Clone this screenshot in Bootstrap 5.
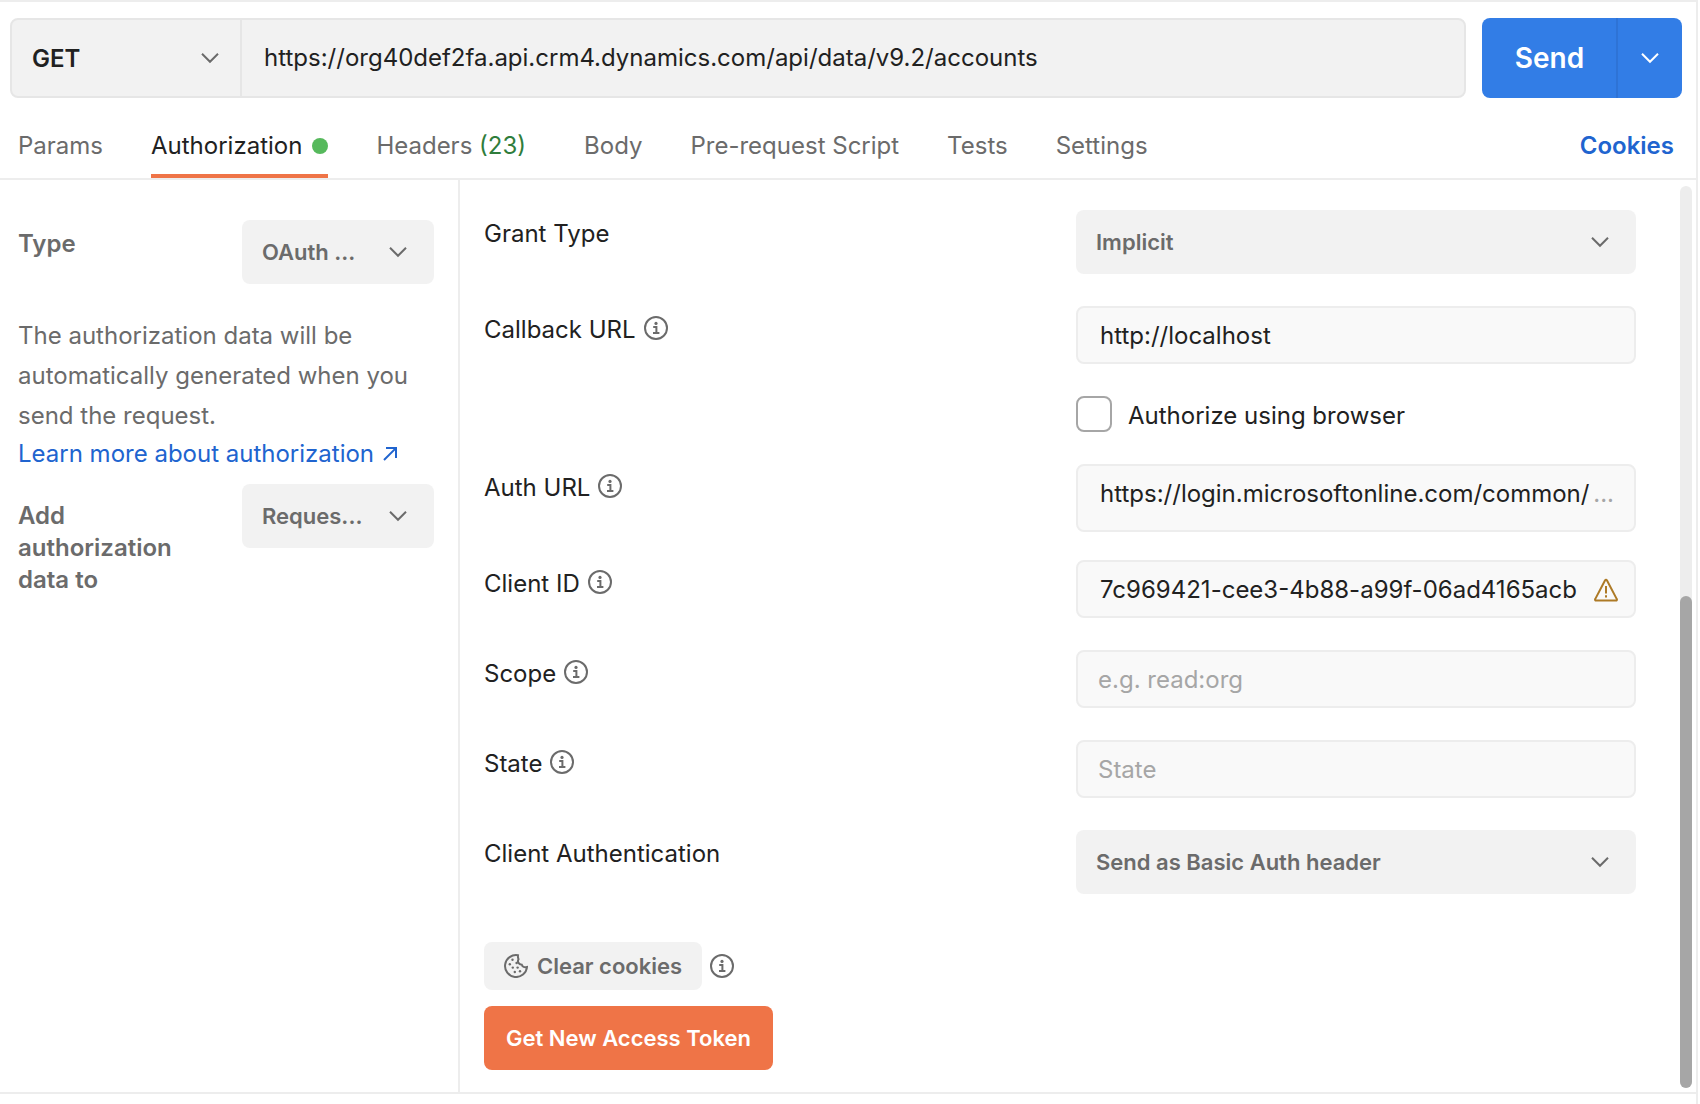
<!DOCTYPE html>
<html lang="en">
<head>
<meta charset="utf-8">
<meta name="viewport" content="width=device-width, initial-scale=1">
<title>Request authorization</title>
<link href="https://cdn.jsdelivr.net/npm/bootstrap@5.3.0/dist/css/bootstrap.min.css" rel="stylesheet">
<style>
:root { --ink: #212121; --dim: #6b6b6b; --line: #ededed; --fill: #f2f2f2; --link: #2064cf; }
body { font-family: Inter, "Liberation Sans", sans-serif; font-size: 24px; line-height: 32px; color: var(--ink); background: #fff; }
svg { flex: none; display: block; }
.pane { border-top: 2px solid var(--line); border-right: 2px solid var(--line); margin-right: 2px; }
.url-row { padding: 16px 14px 0 10px; gap: 16px; }
.url-box { height: 80px; border: 2px solid #e6e6e6; border-radius: 8px; background: var(--fill); overflow: hidden; }
.method-pick { flex: 0 0 230px; border: 0; border-right: 2px solid #e6e6e6; border-radius: 0; font-size: 24px; font-weight: 600; color: var(--ink); background-color: transparent; padding: 2px 20px 0; background-position: right 20px center; }
.url-input { border: 0; background: transparent; font-size: 24px; color: var(--ink); padding: 0 22px; border-radius: 0; }
.chev { background-image: url("data:image/svg+xml,%3Csvg xmlns='http://www.w3.org/2000/svg' viewBox='0 0 20 12'%3E%3Cpath d='M2 1.8l8 8 8-8' fill='none' stroke='%236b6b6b' stroke-width='2'/%3E%3C/svg%3E"); background-size: 20px 12px; background-repeat: no-repeat; }
.send-group { height: 80px; width: 200px; }
.send-group .btn { background: #327de6; border: 0; color: #fff; font-size: 28px; font-weight: 600; border-radius: 8px; padding: 0; }
.send-group .send-menu { flex: 0 0 66px; border-left: 2px solid #2e73d6; }
.tab-bar { padding: 16px 22px 0 18px; border-bottom: 2px solid var(--line); }
.tab-bar .nav { gap: 0 48px; }
.tab-bar .nav-link { color: var(--dim); padding: 16px 0 12px; height: 64px; border-bottom: 4px solid transparent; display: flex; align-items: center; }
.tab-bar .nav-link.active { color: var(--ink); border-color: #ef7447; }
.tab-bar .count { color: #2f7d3b; padding-right: 10px; white-space: pre; }
.dot { width: 16px; height: 16px; border-radius: 50%; background: #56b95c; margin-left: 10px; }
.cookies-link { color: var(--link); font-weight: 600; }
.auth-area { border-bottom: 2px solid var(--line); }
.auth-side { flex: 0 0 460px; border-right: 2px solid var(--line); padding: 40px 24px 0 18px; color: var(--dim); }
.side-label { font-weight: 600; max-width: 180px; }
.side-text { line-height: 40px; margin: 32px 0 2px; }
.side-link { color: var(--link); margin-bottom: 14px; }
.pick { height: 64px; border: 0; border-radius: 8px; background-color: var(--fill); color: var(--dim); font-size: 22px; font-weight: 600; padding: 0 20px; background-position: right 26px center; }
.side-pick { width: 192px; flex: none; }
.auth-main { padding: 30px 44px 22px 24px; }
.field-list { gap: 32px; }
.field-label { line-height: 30px; padding-top: 9px; gap: 8px; }
.field-label svg { margin-bottom: 4px; }
.field-box { flex: 0 0 560px; }
.auth-url { margin-bottom: -4px; }
.more { color: #a6a6a6; }
.txt { height: 58px; border: 2px solid var(--line); border-radius: 8px; background: #f9f9f9; font-size: 24px; color: var(--ink); padding: 0 20px 0 22px; }
input.txt::placeholder { color: #a6a6a6; opacity: 1; }
input.txt:placeholder-shown { padding-left: 20px; }
.txt input { border: 0; background: transparent; padding: 0; color: inherit; min-width: 0; }
.txt.tall { height: 68px; padding-bottom: 8px; }
.txt.flagged { padding-top: 2px; padding-right: 16px; }
.form-check .tick { width: 36px; height: 36px; margin: 0; border: 2px solid #a6a6a6; border-radius: 8px; flex: none; }
.form-check { gap: 16px; min-height: 36px; }
.form-check label { padding-top: 4px; }
.clear-btn { height: 48px; background: var(--fill); color: var(--dim); border: 0; border-radius: 8px; font-size: 22px; font-weight: 600; padding: 0 20px; gap: 9px; }
.token-btn { height: 64px; background: #ef7447; color: #fff; border: 0; border-radius: 8px; font-size: 22px; font-weight: 600; padding: 0 22px; }
.scroll-track { flex: 0 0 12px; margin: 6px 4px 4px 0; border-radius: 6px; background: var(--line); }
.scroll-thumb { height: 54.5%; border-radius: 6px; background: #a6a6a6; }
</style>
</head>
<body>
<svg class="d-none" aria-hidden="true">
  <symbol id="info" viewBox="0 0 24 24"><circle cx="12" cy="12" r="11" fill="none" stroke="#6b6b6b" stroke-width="2"/><circle cx="12" cy="7.4" r="1.6" fill="#6b6b6b"/><path d="M9.2 11h3.200v6M9 17h6.400" fill="none" stroke="#6b6b6b" stroke-width="2"/></symbol>
</svg>
<div class="pane min-vh-100">
  <form class="url-row d-flex">
    <div class="url-box d-flex flex-grow-1">
      <select class="form-select chev method-pick" aria-label="Method"><option>GET</option></select>
      <input class="form-control url-input flex-grow-1" aria-label="Request URL" value="https://org40def2fa.api.crm4.dynamics.com/api/data/v9.2/accounts">
    </div>
    <div class="btn-group send-group">
      <button type="button" class="btn flex-grow-1">Send</button>
      <button type="button" class="btn send-menu d-flex align-items-center justify-content-center" aria-label="Send options">
        <svg width="20" height="12" viewBox="0 0 20 12"><path d="M2 1.8l8 8 8-8" fill="none" stroke="#fff" stroke-width="2"/></svg>
      </button>
    </div>
  </form>
  <div class="tab-bar d-flex justify-content-between align-items-center">
    <nav class="nav">
      <a class="nav-link" href="#">Params</a>
      <a class="nav-link active" href="#">Authorization<span class="dot"></span></a>
      <a class="nav-link" href="#">Headers<span class="count"> (23)</span></a>
      <a class="nav-link" href="#">Body</a>
      <a class="nav-link" href="#">Pre-request Script</a>
      <a class="nav-link" href="#">Tests</a>
      <a class="nav-link" href="#">Settings</a>
    </nav>
    <a class="cookies-link text-decoration-none" href="#">Cookies</a>
  </div>
  <div class="auth-area d-flex">
    <aside class="auth-side">
      <div class="d-flex justify-content-between">
        <label class="side-label pt-2" for="type">Type</label>
        <select id="type" class="form-select chev pick side-pick"><option>OAuth ...</option></select>
      </div>
      <p class="side-text">The authorization data will be automatically generated when you send the request.</p>
      <a class="side-link text-decoration-none d-flex align-items-center gap-2" href="#">Learn more about authorization
        <svg width="16" height="16" viewBox="0 0 16 16"><path d="M2 14L13.400 2.600M4 2h10v10" fill="none" stroke="#2064cf" stroke-width="2"/></svg>
      </a>
      <div class="d-flex justify-content-between">
        <label class="side-label pt-3" for="addto">Add authorization data to</label>
        <select id="addto" class="form-select chev pick side-pick"><option>Reques...</option></select>
      </div>
    </aside>
    <main class="auth-main flex-grow-1">
      <div class="field-list d-flex flex-column">
        <div class="d-flex justify-content-between">
          <label class="field-label" for="grant">Grant Type</label>
          <div class="field-box"><select id="grant" class="form-select chev pick"><option>Implicit</option></select></div>
        </div>
        <div class="d-flex justify-content-between">
          <label class="field-label d-flex align-self-start align-items-center" for="callback">Callback URL <svg width="24" height="24"><use href="#info"/></svg></label>
          <div class="field-box"><input id="callback" class="form-control txt" value="http://localhost"></div>
        </div>
        <div class="d-flex justify-content-end">
          <div class="field-box form-check d-flex align-items-center m-0 p-0">
            <input id="browser" type="checkbox" class="form-check-input tick float-none"><label for="browser">Authorize using browser</label>
          </div>
        </div>
        <div class="d-flex justify-content-between auth-url">
          <label class="field-label d-flex align-self-start align-items-center" for="authurl">Auth URL <svg width="24" height="24"><use href="#info"/></svg></label>
          <div class="field-box"><div class="txt tall d-flex align-items-center"><input id="authurl" class="flex-grow-1" value="https://login.microsoftonline.com/common/"><span class="more">...</span></div></div>
        </div>
        <div class="d-flex justify-content-between">
          <label class="field-label d-flex align-self-start align-items-center" for="client">Client ID <svg width="24" height="24"><use href="#info"/></svg></label>
          <div class="field-box"><div class="txt flagged d-flex align-items-center"><input id="client" class="flex-grow-1" value="7c969421-cee3-4b88-a99f-06ad4165acb">
            <svg width="24" height="24" viewBox="0 0 24 24" fill="none" stroke="#ad7a26" stroke-width="2"><path d="M11.100 2.200a1 1 0 0 1 1.800 0l9.900 18.900a1 1 0 0 1-.9 1.500H2.100a1 1 0 0 1-.9-1.500z"/><path d="M12 8v7.400M12 17.200v2.200"/></svg></div></div>
        </div>
        <div class="d-flex justify-content-between">
          <label class="field-label d-flex align-self-start align-items-center" for="scope">Scope <svg width="24" height="24"><use href="#info"/></svg></label>
          <div class="field-box"><input id="scope" class="form-control txt" placeholder="e.g. read:org"></div>
        </div>
        <div class="d-flex justify-content-between">
          <label class="field-label d-flex align-self-start align-items-center" for="state">State <svg width="24" height="24"><use href="#info"/></svg></label>
          <div class="field-box"><input id="state" class="form-control txt" placeholder="State"></div>
        </div>
        <div class="d-flex justify-content-between">
          <label class="field-label" for="clientauth">Client Authentication</label>
          <div class="field-box"><select id="clientauth" class="form-select chev pick"><option>Send as Basic Auth header</option></select></div>
        </div>
      </div>
      <div class="d-flex align-items-center gap-2 mt-5">
        <button type="button" class="btn clear-btn d-flex align-items-center">
          <svg width="24" height="24" viewBox="0 0 24 24" fill="none" stroke="#6b6b6b" stroke-width="2"><path d="M14 1.200A11 11 0 1 0 23 13c-2.600.8-4.600-.2-5.200-2.300C14.800 10.400 13 8 14.500 5.200 14 4 13.800 2.600 14 1.200z"/><g fill="#6b6b6b" stroke="none"><circle cx="8.500" cy="5.800" r="1.200"/><circle cx="12.600" cy="9" r="1.200"/><circle cx="5.800" cy="10.200" r="1.200"/><circle cx="8.800" cy="13.600" r="1.200"/><circle cx="13.600" cy="13.600" r="1.200"/><circle cx="10.800" cy="18" r="1.200"/><circle cx="16" cy="17.200" r="1.200"/></g></svg>
          Clear cookies
        </button>
        <svg width="24" height="24"><use href="#info"/></svg>
      </div>
      <button type="button" class="btn token-btn mt-3">Get New Access Token</button>
    </main>
    <div class="scroll-track d-flex flex-column justify-content-end"><div class="scroll-thumb"></div></div>
  </div>
</div>
<script src="https://cdn.jsdelivr.net/npm/bootstrap@5.3.0/dist/js/bootstrap.bundle.min.js"></script>
</body>
</html>
